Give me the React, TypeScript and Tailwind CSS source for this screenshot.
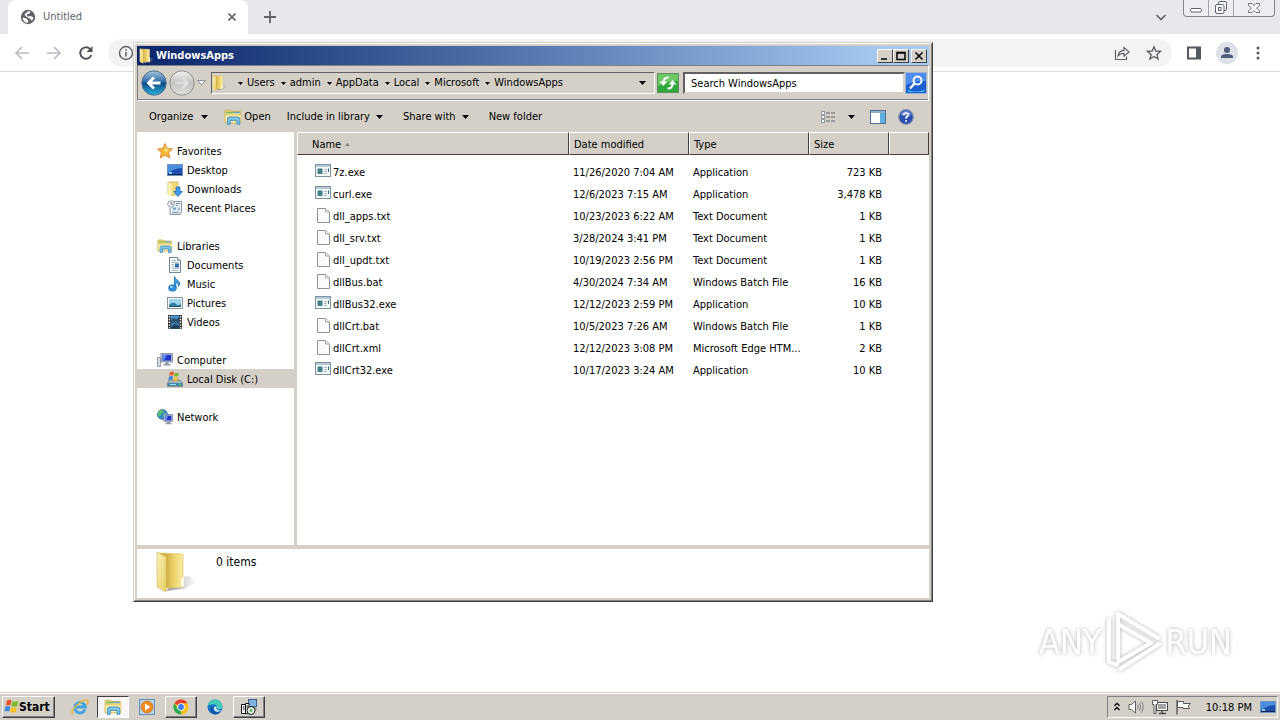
import type { ReactNode } from 'react'

interface FileRow {
  name: string
  date: string
  type: string
  size: string
}

interface NavItem {
  label: string
  icon: ReactNode
  selected?: boolean
}

interface NavGroup extends NavItem {
  items: NavItem[]
}

/* ---------- Explorer icons ---------- */

function FolderIcon({ className = 'h-4 w-4' }: { className?: string }) {
  return (
    <svg className={className} viewBox="0 0 40 42">
      <defs>
        <linearGradient id="folderFront" x1="0" y1="0" x2="1" y2="1">
          <stop offset="0" stopColor="#f9f1bb" />
          <stop offset="1" stopColor="#ead063" />
        </linearGradient>
        <linearGradient id="folderBack" x1="0" y1="0" x2="1" y2="0">
          <stop offset="0.300" stopColor="#d0ae45" />
          <stop offset="0.600" stopColor="#ecd26a" />
          <stop offset="1" stopColor="#f9eda4" />
        </linearGradient>
        <linearGradient id="folderShade" x1="0" y1="0" x2="1" y2="0">
          <stop offset="0" stopColor="#8d8f98" stopOpacity="0.9" />
          <stop offset="1" stopColor="#8d8f98" stopOpacity="0" />
        </linearGradient>
      </defs>
      <path d="M22 26L34 25L40 31L28 38L10 40Z" fill="url(#folderShade)" />
      <path d="M3 2L27 3V36L12 37L3 36Z" fill="url(#folderBack)" stroke="#dcc05c" strokeWidth="0.6" />
      <path d="M1 1L10 6V41L1 36Z" fill="url(#folderFront)" stroke="#d9bd57" strokeWidth="0.6" />
      <path d="M25 28L28 25V35L25 36Z" fill="#fffbe0" />
    </svg>
  )
}

function LibraryIcon({ className = 'h-4 w-4' }: { className?: string }) {
  return (
    <svg className={className} viewBox="0 0 16 16">
      <path d="M1 2H6L7 3H14.500V13H1Z" fill="#f2dc7c" stroke="#d2b04c" strokeWidth="0.8" />
      <path d="M2 4H8L9 3.500" stroke="#69b96c" strokeWidth="1.200" fill="none" />
      <path d="M9 4H14" stroke="#5ba7dc" strokeWidth="1.200" />
      <path d="M1 6H15V13H1Z" fill="#fbeeaa" stroke="#dfc261" strokeWidth="0.6" />
      <path d="M3 14.500V10Q3 8 5 8H12Q14 8 14 10V14.500H11.500V11H5.500V14.500Z" fill="#7cc4e8" stroke="#3e8fc0" strokeWidth="0.8" />
    </svg>
  )
}

function StarIcon() {
  return (
    <svg className="h-4 w-4" viewBox="0 0 16 16">
      <path d="M8 0.600L10.200 5.500L15.500 6L11.600 9.600L12.800 15L8 12.200L3.200 15L4.400 9.600L0.500 6L5.800 5.500Z" fill="#fdb83a" stroke="#d9822b" strokeWidth="0.9" />
      <path d="M8 2.500L9.400 6.300L13 6.700L8 9Z" fill="#ffe48f" />
    </svg>
  )
}

function DesktopIcon() {
  return (
    <svg className="h-4 w-4" viewBox="0 0 16 16">
      <rect x="0.500" y="2.500" width="15" height="11" fill="#1d4fae" stroke="#7193c4" />
      <path d="M1 3H15V6Q8 6 1 11Z" fill="#4a8ee0" />
      <path d="M1 12H15V13H1Z" fill="#12264f" />
      <path d="M2 10H5V12H2Z" fill="#8fc3f0" />
    </svg>
  )
}

function DownloadsIcon() {
  return (
    <svg className="h-4 w-4" viewBox="0 0 16 16">
      <path d="M1 1H11V13L6 14.500L1 13.500Z" fill="#f0d978" stroke="#caa945" strokeWidth="0.7" />
      <path d="M1 1L5 3V15L1 13.500Z" fill="#fbeeaa" />
      <path d="M9 6H13V10.500H15.500L11 15.500L6.500 10.500H9Z" fill="#3d9be9" stroke="#1c66b4" strokeWidth="0.7" />
    </svg>
  )
}

function RecentIcon() {
  return (
    <svg className="h-4 w-4" viewBox="0 0 16 16">
      <path d="M5 1.500H14.500V12L13 14.500H3V8" fill="#e9eef3" stroke="#7d8b99" strokeWidth="0.9" />
      <circle cx="4" cy="4" r="3.300" fill="#f5f8fb" stroke="#8796a5" strokeWidth="0.9" />
      <path d="M4 2V4.200H6" stroke="#556" strokeWidth="0.8" fill="none" />
      <path d="M9 3.500H13M9 5.500H11" stroke="#6d93b8" />
      <rect x="6" y="7.500" width="3" height="2.500" fill="#7fa7c9" />
      <rect x="10.500" y="7.500" width="2.500" height="2.500" fill="#a3b8c9" />
      <path d="M5 12.500H12" stroke="#8da0b0" strokeWidth="1.500" />
    </svg>
  )
}

function DocumentIcon() {
  return (
    <svg className="h-4 w-4" viewBox="0 0 16 16">
      <path d="M2.500 0.500H10.500L13.500 3.500V15.500H2.500Z" fill="#fff" stroke="#6f8395" />
      <path d="M10.500 0.500V3.500H13.500" fill="#d8e2ea" stroke="#6f8395" strokeWidth="0.8" />
      <path d="M4.500 3.500H9M4.500 5.500H11.500M4.500 7.500H7M4.500 9.500H7M4.500 11.500H11.500M4.500 13.500H11.500" stroke="#8ba6be" strokeWidth="0.8" />
      <rect x="8" y="6.500" width="4" height="4" fill="#2f70b0" />
    </svg>
  )
}

function MusicIcon() {
  return (
    <svg className="h-4 w-4" viewBox="0 0 16 16">
      <path d="M7.500 0.500Q8 3 11 4.500Q14 6.500 11.500 10.500Q12 7 8.800 6V12H7.500Z" fill="#4aa9e6" stroke="#1c73b8" strokeWidth="0.9" />
      <ellipse cx="5.500" cy="12" rx="4" ry="3.300" fill="#2f8fdc" stroke="#1b66a9" strokeWidth="0.6" />
      <ellipse cx="4.500" cy="11" rx="1.500" ry="1" fill="#a9dbf7" />
    </svg>
  )
}

function PictureIcon() {
  return (
    <svg className="h-4 w-4" viewBox="0 0 16 16">
      <rect x="0.500" y="2.500" width="15" height="11" fill="#fff" stroke="#8797a6" />
      <rect x="2" y="4" width="12" height="8" fill="#9fd3ee" />
      <path d="M2 10Q6 6 9 9T14 8V12H2Z" fill="#2e7e9c" />
      <path d="M2 11H14V12H2Z" fill="#1f5470" />
    </svg>
  )
}

function VideoIcon() {
  return (
    <svg className="h-4 w-4" viewBox="0 0 16 16">
      <rect x="1" y="1" width="14" height="14" fill="#2f3338" />
      <path d="M4 1.500H12V7.500H4Z" fill="#4b94cf" />
      <path d="M4 8.500H12V14.500H4Z" fill="#3b7db6" />
      <path d="M4 6L7 3.500L9 5.500L12 3V7.500H4Z" fill="#274f73" />
      <path d="M4 13L8 10L12 12V14.500H4Z" fill="#1d3d5c" />
      <path d="M2.500 2V15M13.500 2V15" stroke="#fff" strokeWidth="1.400" strokeDasharray="1.400 1.400" />
    </svg>
  )
}

function ComputerIcon() {
  return (
    <svg className="h-4 w-4" viewBox="0 0 16 16">
      <path d="M0.500 5.500H3.500V14.500H0.500Z" fill="#d5d9de" stroke="#858d97" strokeWidth="0.8" />
      <rect x="4" y="1.500" width="11.500" height="8.500" fill="#c5ccd6" stroke="#7a8594" strokeWidth="0.8" />
      <rect x="5.200" y="2.700" width="9" height="6" fill="#2334c8" />
      <path d="M5.200 2.700H10L7 8.700H5.200Z" fill="#5f86ee" />
      <path d="M8.500 10H11.500V12H13.500V13.500H6.500V12H8.500Z" fill="#8d96a3" />
    </svg>
  )
}

function DiskIcon() {
  return (
    <svg className="h-4 w-4" viewBox="0 0 16 16">
      <path d="M2 9H13L15.500 12V15.500H0.500V12Z" fill="#aab3bb" stroke="#6f7a84" strokeWidth="0.7" />
      <path d="M0.800 12H15.200V15H0.800Z" fill="#3c87a5" />
      <path d="M3 13.500H9" stroke="#9fe0ee" />
      <circle cx="13" cy="13.500" r="0.900" fill="#76e052" />
      <path d="M3 1Q5.500 0 7 1.200L6.300 4.700Q4.500 3.800 2.200 4.700Z" fill="#ee5b2b" />
      <path d="M7.800 1.500Q10 2.600 12 1.500L11.200 5Q9.200 6 7.100 5Z" fill="#77b82a" />
      <path d="M2 5.500Q4.300 4.500 6.100 5.600L5.400 9Q3.500 8 1.300 9Z" fill="#3c87dc" />
      <path d="M6.900 5.900Q9 6.900 11 5.900L10.200 9.300Q8.300 10.300 6.200 9.300Z" fill="#fbc11d" />
    </svg>
  )
}

function NetworkIcon() {
  return (
    <svg className="h-4 w-4" viewBox="0 0 16 16">
      <circle cx="5.500" cy="5.500" r="5" fill="#2f86c8" stroke="#245f8d" strokeWidth="0.6" />
      <path d="M2 2Q5 0 7 2Q6 4 4 4.500Q4 7 2.500 8Q0 5 2 2Z" fill="#5fc26a" />
      <path d="M6 5L9 4L9.500 7L7 9Z" fill="#8ee08f" />
      <rect x="7" y="5.500" width="8.500" height="7" fill="#c9d2dd" stroke="#6c7890" strokeWidth="0.7" />
      <rect x="8.200" y="6.600" width="6.200" height="4.800" fill="#2131cc" />
      <path d="M8.200 6.600H11L9.500 11.400H8.200Z" fill="#6b90f3" />
      <path d="M10 12.500H13V14H14.500V15.200H8.500V14H10Z" fill="#8d96a3" />
    </svg>
  )
}

function ExeIcon() {
  return (
    <svg className="h-4 w-4" viewBox="0 0 16 16">
      <rect x="0.500" y="0.500" width="15" height="12" fill="#f7fafb" stroke="#7e93a2" />
      <path d="M1 1H15V3H1Z" fill="#b6c8d6" />
      <rect x="2.500" y="4.500" width="5" height="5.500" fill="#447f86" />
      <path d="M9 5.500H12M9 7.500H12M9 9.500H12" stroke="#a7bac5" />
      <path d="M13.500 4.500V8" stroke="#3b6a86" />
    </svg>
  )
}

function BlankFileIcon() {
  return (
    <svg className="h-4 w-4" viewBox="0 0 16 16">
      <path d="M2.500 0.500H10.500L14.500 4V14.500H2.500Z" fill="#fbfbfb" stroke="#929292" />
      <path d="M10.500 0.500V4H14.500" fill="#e5e5e5" stroke="#a2a2a2" strokeWidth="0.8" />
    </svg>
  )
}

function DownArrow({ className = '' }: { className?: string }) {
  return (
    <svg className={`shrink-0 ${className}`} width="7" height="4" viewBox="0 0 7 4">
      <path d="M0 0H7L3.500 4Z" fill="#000" />
    </svg>
  )
}

/* ---------- Browser behind the window ---------- */

function Browser() {
  return (
    <header className="border-b border-[#dadce0]">
      <div className="flex h-[34px] items-start bg-[#e6e8ec]">
        <div className="ml-2 flex h-[34px] w-60 items-center rounded-t-lg bg-white px-3 text-[#5f6368]">
          <svg className="h-4 w-4" viewBox="0 0 16 16">
            <circle cx="8" cy="8" r="7.200" fill="#5f6368" />
            <path d="M2.500 8.500L6.500 9.500L8.500 12L7.500 14Q3.500 13.500 2.500 8.500Z" fill="#fff" />
            <path d="M8 2.200H10.500L9.500 4.500L6.500 5.500L7.500 7.500L10.500 7L13.500 8.500L12 12L10.500 10L6 7.500L4.500 5.500Z" fill="#fff" />
          </svg>
          <span className="ml-[7px] flex-1">Untitled</span>
          <button type="button" aria-label="Close tab">
            <svg className="h-2 w-2" viewBox="0 0 8 8">
              <path d="M0.500 0.500L7.500 7.500M7.500 0.500L0.500 7.500" stroke="#5f6368" strokeWidth="1.600" />
            </svg>
          </button>
        </div>
        <button type="button" aria-label="New tab" className="ml-4 flex h-[34px] items-center">
          <svg className="h-3 w-3" viewBox="0 0 12 12">
            <path d="M6 0V12M0 6H12" stroke="#5f6368" strokeWidth="1.800" />
          </svg>
        </button>
        <button type="button" aria-label="Search tabs" className="mr-4 ml-auto flex h-[34px] items-center">
          <svg className="h-3 w-3" viewBox="0 0 12 12">
            <path d="M1.500 4L6 8.500L10.500 4" stroke="#5f6368" strokeWidth="1.700" fill="none" />
          </svg>
        </button>
        <div className="mr-[5px] flex h-[17px] rounded-b border border-t-0 border-[#80858c] bg-[#eceef1]">
          <button type="button" aria-label="Minimize" className="flex w-[25px] items-center justify-center border-r border-[#a3a7ad]">
            <svg className="h-4 w-4" viewBox="0 0 16 16">
              <rect x="2.500" y="8.500" width="11" height="3.500" rx="1.500" fill="#fff" stroke="#5c6370" />
            </svg>
          </button>
          <button type="button" aria-label="Restore" className="flex w-[25px] items-center justify-center border-r border-[#a3a7ad]">
            <svg className="h-4 w-4" viewBox="0 0 16 16">
              <rect x="5.500" y="1.500" width="8" height="9" rx="1.500" fill="#fff" stroke="#5c6370" />
              <rect x="2.500" y="4.500" width="8.500" height="9" rx="1.500" fill="#fff" stroke="#5c6370" />
              <rect x="5.500" y="7.500" width="2.500" height="3" fill="#fff" stroke="#5c6370" />
            </svg>
          </button>
          <button type="button" aria-label="Close" className="flex w-10 items-center justify-center">
            <svg className="h-4 w-4" viewBox="0 0 16 16">
              <path d="M2.500 3.500H6L8 5.500L10 3.500H13.500V5.500L10.500 8L13.500 11V12.500H10L8 10.500L6 12.500H2.500V11L5.500 8L2.500 5.500Z" fill="#fff" stroke="#5c6370" strokeWidth="0.9" />
            </svg>
          </button>
        </div>
      </div>

      <div className="flex h-[37px] items-center px-3.5">
        <button type="button" aria-label="Back">
          <svg className="h-4 w-4" viewBox="0 0 16 16">
            <path d="M15 8H2M8 2L2 8L8 14" stroke="#b9bcc0" strokeWidth="1.700" fill="none" />
          </svg>
        </button>
        <button type="button" aria-label="Forward" className="ml-4">
          <svg className="h-4 w-4" viewBox="0 0 16 16">
            <path d="M1 8H14M8 2L14 8L8 14" stroke="#b9bcc0" strokeWidth="1.700" fill="none" />
          </svg>
        </button>
        <button type="button" aria-label="Reload" className="ml-4">
          <svg className="h-4 w-4" viewBox="0 0 16 16">
            <path d="M13.300 10A5.700 5.700 0 1 1 12 4" stroke="#4d5156" strokeWidth="1.900" fill="none" />
            <path d="M14.500 1V7H8.500Z" fill="#4d5156" />
          </svg>
        </button>
        <div className="ml-3.5 flex h-7 flex-1 items-center rounded-full bg-[#f1f3f4] px-2.5">
          <svg className="h-4 w-4" viewBox="0 0 16 16">
            <circle cx="8" cy="8" r="6.500" fill="none" stroke="#5f6368" strokeWidth="1.400" />
            <path d="M8 7V11.500M8 4.300V5.800" stroke="#5f6368" strokeWidth="1.600" />
          </svg>
          <input aria-label="Address" className="min-w-0 flex-1 bg-transparent outline-none" />
          <button type="button" aria-label="Share">
            <svg className="h-4 w-4" viewBox="0 0 16 16">
              <path d="M1.500 5V14.500H12.500V11.500" stroke="#5f6368" strokeWidth="1.200" fill="none" />
              <path d="M4 11Q4.500 5.500 10 5.300V2.500L15 7L10 11.200V8.300Q6 8.200 4 11Z" stroke="#5f6368" strokeWidth="1.200" fill="none" />
            </svg>
          </button>
          <button type="button" aria-label="Bookmark" className="ml-4">
            <svg className="h-4 w-4" viewBox="0 0 16 16">
              <path d="M8 1.800L9.800 6L14.500 6.400L10.900 9.400L12 14L8 11.500L4 14L5.100 9.400L1.500 6.400L6.200 6Z" fill="none" stroke="#5f6368" strokeWidth="1.400" />
            </svg>
          </button>
        </div>
        <button type="button" aria-label="Side panel" className="ml-3.5">
          <svg className="h-4 w-4" viewBox="0 0 16 16">
            <path d="M1 1.500H15V14.500H1ZM3 3.500V12.500H10V3.500Z" fill="#55585e" fillRule="evenodd" />
          </svg>
        </button>
        <button type="button" aria-label="Profile" className="ml-3.5 rounded-full bg-[#dde1e8]">
          <svg className="h-[22px] w-[22px]" viewBox="0 0 22 22">
            <circle cx="11" cy="8" r="3" fill="#4f5b78" />
            <path d="M5 16V14.500Q5 12 11 12T17 14.500V16Z" fill="#4f5b78" />
          </svg>
        </button>
        <button type="button" aria-label="Menu" className="ml-3">
          <svg className="h-4 w-4" viewBox="0 0 16 16" fill="#55585e">
            <circle cx="8" cy="3" r="1.500" />
            <circle cx="8" cy="8" r="1.500" />
            <circle cx="8" cy="13" r="1.500" />
          </svg>
        </button>
      </div>
    </header>
  )
}

/* ---------- Explorer window ---------- */

const crumbs = ['Users', 'admin', 'AppData', 'Local', 'Microsoft', 'WindowsApps']

const navGroups: NavGroup[] = [
  {
    label: 'Favorites',
    icon: <StarIcon />,
    items: [
      { label: 'Desktop', icon: <DesktopIcon /> },
      { label: 'Downloads', icon: <DownloadsIcon /> },
      { label: 'Recent Places', icon: <RecentIcon /> },
    ],
  },
  {
    label: 'Libraries',
    icon: <LibraryIcon />,
    items: [
      { label: 'Documents', icon: <DocumentIcon /> },
      { label: 'Music', icon: <MusicIcon /> },
      { label: 'Pictures', icon: <PictureIcon /> },
      { label: 'Videos', icon: <VideoIcon /> },
    ],
  },
  {
    label: 'Computer',
    icon: <ComputerIcon />,
    items: [{ label: 'Local Disk (C:)', icon: <DiskIcon />, selected: true }],
  },
  { label: 'Network', icon: <NetworkIcon />, items: [] },
]

const files: FileRow[] = [
  { name: '7z.exe', date: '11/26/2020 7:04 AM', type: 'Application', size: '723 KB' },
  { name: 'curl.exe', date: '12/6/2023 7:15 AM', type: 'Application', size: '3,478 KB' },
  { name: 'dll_apps.txt', date: '10/23/2023 6:22 AM', type: 'Text Document', size: '1 KB' },
  { name: 'dll_srv.txt', date: '3/28/2024 3:41 PM', type: 'Text Document', size: '1 KB' },
  { name: 'dll_updt.txt', date: '10/19/2023 2:56 PM', type: 'Text Document', size: '1 KB' },
  { name: 'dllBus.bat', date: '4/30/2024 7:34 AM', type: 'Windows Batch File', size: '16 KB' },
  { name: 'dllBus32.exe', date: '12/12/2023 2:59 PM', type: 'Application', size: '10 KB' },
  { name: 'dllCrt.bat', date: '10/5/2023 7:26 AM', type: 'Windows Batch File', size: '1 KB' },
  { name: 'dllCrt.xml', date: '12/12/2023 3:08 PM', type: 'Microsoft Edge HTM...', size: '2 KB' },
  { name: 'dllCrt32.exe', date: '10/17/2023 3:24 AM', type: 'Application', size: '10 KB' },
]

function CaptionButton({ label, path, className = '' }: { label: string; path: string; className?: string }) {
  return (
    <button
      type="button"
      aria-label={label}
      className={`flex h-3.5 w-4 items-center justify-center border border-t-white border-r-[#404040] border-b-[#404040] border-l-white bg-[#d4d0c8] ${className}`}
    >
      <svg width="10" height="10" viewBox="0 0 10 10">
        <path d={path} stroke="#000" strokeWidth="1.500" fill="none" />
      </svg>
    </button>
  )
}

function TitleBar() {
  return (
    <div className="flex h-[19px] items-center bg-linear-to-r from-[#0a246a] to-[#a6caf0] to-95% px-0.5">
      <FolderIcon />
      <span className="ml-px flex-1 font-bold text-white">WindowsApps</span>
      <CaptionButton label="Minimize" path="M1 8H7" />
      <CaptionButton label="Maximize" path="M1 1.500H9V8.500H1ZM1 2H9" />
      <CaptionButton label="Close" path="M1.500 1.500L8.500 8.500M8.500 1.500L1.500 8.500" className="ml-0.5" />
    </div>
  )
}

function AddressBar() {
  return (
    <div className="flex h-9 items-center border border-t-[#808080] border-r-white border-b-white border-l-[#808080] pr-px pl-[3px] shadow-[inset_0_-1px_0_#808080]">
      <button type="button" aria-label="Back">
        <svg className="h-[26px] w-[26px]" viewBox="0 0 26 26">
          <defs>
            <linearGradient id="backBlue" x1="0" y1="0" x2="0" y2="1">
              <stop offset="0" stopColor="#a9c6e0" />
              <stop offset="0.450" stopColor="#2f6ea8" />
              <stop offset="0.500" stopColor="#0b4a86" />
              <stop offset="1" stopColor="#2cb4dd" />
            </linearGradient>
          </defs>
          <circle cx="13" cy="13" r="12.200" fill="url(#backBlue)" stroke="#4f6b86" />
          <path d="M19.500 13H8M13 7.500L7.500 13L13 18.500" fill="none" stroke="#fff" strokeWidth="2.800" />
        </svg>
      </button>
      <button type="button" aria-label="Forward" className="ml-0.5">
        <svg className="h-[26px] w-[26px]" viewBox="0 0 26 26">
          <defs>
            <linearGradient id="forwardGrey" x1="0" y1="0" x2="0" y2="1">
              <stop offset="0" stopColor="#f2f1ef" />
              <stop offset="0.500" stopColor="#c4c2bf" />
              <stop offset="1" stopColor="#e4e2df" />
            </linearGradient>
          </defs>
          <circle cx="13" cy="13" r="12.200" fill="url(#forwardGrey)" stroke="#8f8e8c" />
          <path d="M6.500 13H18M13 7.500L18.500 13L13 18.500" fill="none" stroke="#e0dfdd" strokeWidth="2.500" />
        </svg>
      </button>
      <button type="button" aria-label="Recent pages" className="ml-0.5">
        <svg width="9" height="6" viewBox="0 0 9 6">
          <path d="M0.500 0.500H8.500L4.500 5Z" fill="#f4f4f4" stroke="#77797c" strokeWidth="0.800" />
        </svg>
      </button>
      <div className="ml-[5px] flex h-[22px] min-w-0 flex-1 items-center border border-t-[#606060] border-r-white border-b-white border-l-[#606060] pr-2">
        <FolderIcon />
        <nav aria-label="Path" className="ml-1 flex flex-1 items-center">
          {crumbs.map((crumb) => (
            <span key={crumb} className="flex items-center gap-1 pl-1.5">
              <svg width="5" height="3" viewBox="0 0 5 3">
                <path d="M0 0H5L2.500 3Z" fill="#000" />
              </svg>
              <button type="button">{crumb}</button>
            </span>
          ))}
        </nav>
        <button type="button" aria-label="Previous locations">
          <DownArrow />
        </button>
      </div>
      <button type="button" aria-label="Refresh" className="ml-0.5">
        <svg className="h-5 w-[22px]" viewBox="0 0 22 20">
          <rect x="0.500" y="0.500" width="21" height="19" fill="#2fa83a" stroke="#5f8f62" />
          <path d="M1 1H21V8Q11 8 1 13Z" fill="#6cc765" />
          <path d="M11.500 4.500Q6.500 4.500 6.500 9" fill="none" stroke="#fff" strokeWidth="2" />
          <path d="M2.500 8.500H10.500L6.500 13Z" fill="#fff" />
          <path d="M10.500 15.500Q15.500 15.500 15.500 11" fill="none" stroke="#fff" strokeWidth="2" />
          <path d="M11.500 11.500H19.500L15.500 7Z" fill="#fff" />
        </svg>
      </button>
      <input
        type="text"
        aria-label="Search"
        placeholder="Search WindowsApps"
        className="ml-1 h-[22px] w-[222px] border-2 border-t-[#606060] border-r-[#d4d0c8] border-b-[#d4d0c8] border-l-[#606060] bg-white pl-1.5 outline-none placeholder:text-black"
      />
      <button type="button" aria-label="Start search">
        <svg className="h-[22px] w-[22px]" viewBox="0 0 22 22">
          <rect x="0.500" y="0.500" width="21" height="21" fill="#1d5fcf" stroke="#9fb4d0" />
          <path d="M1 1H21V9Q10 9 1 13Z" fill="#4f8cf0" />
          <path d="M3 18Q11 21 19 18V20H3Z" fill="#39c5f2" />
          <circle cx="12.500" cy="8.500" r="4" fill="none" stroke="#fff" strokeWidth="2" />
          <path d="M9.500 11.500L5 16.500" stroke="#fff" strokeWidth="2.500" />
        </svg>
      </button>
    </div>
  )
}

function Toolbar() {
  return (
    <div className="flex h-[31px] items-center pr-[15px] pl-3">
      <button type="button" className="flex items-center">
        Organize
        <DownArrow className="ml-2" />
      </button>
      <button type="button" className="ml-4 flex items-center">
        <LibraryIcon className="mr-0.5 h-[18px] w-[18px]" />
        Open
      </button>
      <button type="button" className="ml-4 flex items-center">
        Include in library
        <DownArrow className="ml-1.5" />
      </button>
      <button type="button" className="ml-5 flex items-center">
        Share with
        <DownArrow className="ml-1.5" />
      </button>
      <button type="button" className="ml-5">New folder</button>
      <button type="button" aria-label="Change view" className="ml-auto flex items-center">
        <svg className="h-4 w-4" viewBox="0 0 16 16">
          <path d="M1.500 2.500H4.500V5.500H1.500ZM1.500 6.500H4.500V9.500H1.500ZM1.500 10.500H4.500V13.500H1.500Z" fill="#fff" stroke="#77808a" strokeWidth="0.800" />
          <path d="M6 4H15M6 8H15M6 12H15" stroke="#5b6570" strokeDasharray="4 1" />
        </svg>
        <DownArrow className="ml-3" />
      </button>
      <button type="button" aria-label="Preview pane" className="ml-[15px]">
        <svg className="h-4 w-4" viewBox="0 0 16 16">
          <rect x="0.500" y="1.500" width="15" height="13" fill="#fff" stroke="#4d6f91" />
          <path d="M1 2H15V4H1Z" fill="#8fb1cf" />
          <rect x="10" y="4" width="5" height="10" fill="#5db0de" />
        </svg>
      </button>
      <button type="button" aria-label="Help" className="ml-3">
        <svg className="h-4 w-4" viewBox="0 0 16 16">
          <circle cx="8" cy="8" r="7.300" fill="#2b4fb0" stroke="#8290ac" strokeWidth="1.200" />
          <path d="M2.500 6Q4 2 8 2T13.500 6Q8 8 2.500 6Z" fill="#6c8ddb" />
          <path d="M5.600 6Q5.800 4 8 4T10.400 6Q10.400 7.300 8.100 8.200V9.700" stroke="#fff" strokeWidth="1.600" fill="none" />
          <circle cx="8.100" cy="11.900" r="1" fill="#fff" />
        </svg>
      </button>
    </div>
  )
}

function Sidebar() {
  return (
    <aside className="flex w-[160px] shrink-0 flex-col gap-[19px] border-r-3 border-[#d4d0c8] bg-white py-[9px]">
      {navGroups.map((group) => (
        <div key={group.label}>
          <button type="button" className="flex h-[19px] w-full items-center gap-1 pl-5">
            {group.icon}
            <span className="pt-0.5">{group.label}</span>
          </button>
          {group.items.map((item) => (
            <button
              type="button"
              key={item.label}
              className={`flex h-[19px] w-full items-center gap-1 pl-[30px] ${item.selected ? 'bg-[#d4d0c8]' : ''}`}
            >
              {item.icon}
              <span className="pt-0.5">{item.label}</span>
            </button>
          ))}
        </div>
      ))}
    </aside>
  )
}

function FileList() {
  const head = 'h-[23px] border border-t-white border-r-[#404040] border-b-[#404040] border-l-white bg-[#d4d0c8] pt-0.5 pl-1 text-left font-normal'

  return (
    <main className="min-w-0 flex-1 bg-white">
      <table className="w-full table-fixed border-separate border-spacing-0">
        <colgroup>
          <col className="w-[272px]" />
          <col className="w-[120px]" />
          <col className="w-[120px]" />
          <col className="w-[80px]" />
          <col />
        </colgroup>
        <thead>
          <tr>
            <th className={head}>
              <span className="flex items-center pl-2.5">
                Name
                <svg className="ml-1" width="5" height="3" viewBox="0 0 5 3">
                  <path d="M2.500 0L5 3H0Z" fill="#808080" />
                </svg>
              </span>
            </th>
            <th className={head}>Date modified</th>
            <th className={head}>Type</th>
            <th className={head}>Size</th>
            <th className={head} aria-label="Empty" />
          </tr>
        </thead>
        <tbody className="before:block before:h-1.5">
          {files.map((file) => (
            <tr key={file.name} className="h-[22px] whitespace-nowrap">
              <td className="pl-[18px]">
                <span className="flex items-center gap-0.5">
                  {file.name.endsWith('.exe') ? <ExeIcon /> : <BlankFileIcon />}
                  <span className="pt-0.5">{file.name}</span>
                </span>
              </td>
              <td className="pt-0.5 pl-1">{file.date}</td>
              <td className="pt-0.5 pl-1">{file.type}</td>
              <td className="pt-0.5 pr-[7px] text-right">{file.size}</td>
              <td />
            </tr>
          ))}
        </tbody>
      </table>
    </main>
  )
}

function ExplorerWindow() {
  return (
    <section
      aria-label="WindowsApps"
      className="absolute top-[42px] left-[133px] w-[800px] border border-t-[#d4d0c8] border-r-[#404040] border-b-[#404040] border-l-[#d4d0c8]"
    >
      <div className="border border-t-white border-r-[#808080] border-b-[#808080] border-l-white bg-[#d4d0c8] p-0.5">
        <TitleBar />
        <AddressBar />
        <Toolbar />
        <div className="flex min-h-[413px]">
          <Sidebar />
          <FileList />
        </div>
        <div className="mt-1 flex h-[49px] items-start bg-white pt-0.5 pl-[19px]">
          <FolderIcon className="h-[42px] w-10" />
          <span className="ml-5 pt-[3px] text-xs">0 items</span>
        </div>
      </div>
    </section>
  )
}

/* ---------- Watermark ---------- */

function Watermark() {
  return (
    <div className="absolute right-12 bottom-[46px] flex items-center gap-1 text-[34px] leading-none text-white drop-shadow-[0_0_2px_#b4b4b4]">
      <span>ANY</span>
      <svg className="h-16 w-14" viewBox="0 0 56 64" fill="none" stroke="#fff" strokeWidth="4" strokeLinejoin="round" strokeLinecap="round">
        <path d="M13 48V4L53 28" />
        <path d="M4 10V52L12 55" />
        <path d="M13 14L46 33L13 52" />
        <path d="M54 34L15 59" />
      </svg>
      <span>RUN</span>
    </div>
  )
}

/* ---------- Taskbar ---------- */

function TaskButton({ label, active = false, children }: { label: string; active?: boolean; children: ReactNode }) {
  return (
    <button
      type="button"
      aria-label={label}
      className={`flex h-[22px] w-8 items-center justify-center border ${
        active
          ? 'border-t-[#404040] border-r-white border-b-white border-l-[#404040] bg-[#f7f6f4]'
          : 'border-t-white border-r-[#404040] border-b-[#404040] border-l-white shadow-[inset_-1px_-1px_0_#808080]'
      }`}
    >
      {children}
    </button>
  )
}

function Taskbar() {
  return (
    <footer className="mt-auto flex h-7 items-center border-t border-[#d4d0c8] bg-[#d4d0c8] px-0.5 shadow-[inset_0_1px_0_#fff]">
      <button
        type="button"
        className="flex h-[22px] items-center border border-t-white border-r-[#404040] border-b-[#404040] border-l-white pr-1 pl-px text-xs font-bold shadow-[inset_-1px_-1px_0_#808080]"
      >
        <svg className="h-[15px] w-[15px]" viewBox="0 0 15 15">
          <path d="M3 1.500Q5.500 0 7.500 1.500L6.500 6.500Q4.500 5.300 1.800 6.500Z" fill="#ee5426" />
          <path d="M8.500 2Q11 3.500 14.500 2L13.300 7Q10.500 8.500 7.500 7Z" fill="#7cbb2c" />
          <path d="M1.500 7.500Q4.500 6.300 6.300 7.500L5.300 12.500Q3 11.300 0.300 12.500Z" fill="#3f8ae0" />
          <path d="M7.200 8Q10 9.500 13 8L11.900 13Q9 14.500 6.100 13Z" fill="#fcc21b" />
        </svg>
        Start
      </button>
      <div className="ml-4 flex items-center gap-2">
        <button type="button" aria-label="Internet Explorer">
          <svg className="h-[18px] w-[18px]" viewBox="0 0 18 18" fill="none">
            <path d="M14 11.500A5.300 5.300 0 1 1 14.300 9H5" stroke="#3da5e6" strokeWidth="2.800" />
            <path d="M2 16Q-1 14 5 8T16.500 2Q18 3.500 15.500 7" stroke="#e8b53a" strokeWidth="1.400" />
          </svg>
        </button>
        <TaskButton label="Windows Explorer" active>
          <LibraryIcon className="h-[18px] w-[18px]" />
        </TaskButton>
        <button type="button" aria-label="Media Player" className="mx-0.5">
          <svg className="h-4 w-4" viewBox="0 0 16 16">
            <rect x="0.500" y="0.500" width="15" height="15" fill="#b7d5ef" stroke="#5f8fb8" />
            <circle cx="8" cy="8" r="6" fill="#f58a1f" stroke="#d66c0e" strokeWidth="0.700" />
            <path d="M6 4.500L11.500 8L6 11.500Z" fill="#fff" />
          </svg>
        </button>
        <TaskButton label="Chrome">
          <svg className="h-4 w-4" viewBox="0 0 16 16">
            <circle cx="8" cy="8" r="7.500" fill="#fbc116" />
            <path d="M8 8L1.500 4.250A7.500 7.500 0 0 1 14.500 4.250H8Z" fill="#e33b2e" />
            <path d="M1.500 4.250L5.500 11L8 8L8 15.500A7.500 7.500 0 0 1 1.500 4.250Z" fill="#2da94f" />
            <circle cx="8" cy="8" r="3.800" fill="#fff" />
            <circle cx="8" cy="8" r="2.900" fill="#3b7ded" />
          </svg>
        </TaskButton>
        <button type="button" aria-label="Edge" className="mx-0.5">
          <svg className="h-4 w-4" viewBox="0 0 16 16">
            <circle cx="8" cy="8" r="7.500" fill="#1673c4" />
            <path d="M0.600 7A7.500 7.500 0 0 1 15.500 7.500Q15.300 10.500 11.500 10.500Q9.500 10.400 10 9Q10.500 6 7 5.200Q3 4.800 0.600 7Z" fill="#43c9b8" />
            <path d="M6 7.500Q4.500 12.500 9.500 13.500Q12 13.800 14 12Q11.500 15.500 8 15.500Q3.500 14 3.600 10Q4 8 6 7.500Z" fill="#134f9d" />
            <path d="M7 8.500Q6.500 12 10 12.700Q13 13 14.600 11.300Q12 11.800 10 10.700Q8.500 9 10 8Q8 7 7 8.500Z" fill="#d4ecf4" />
          </svg>
        </button>
        <TaskButton label="Setup">
          <svg className="h-[18px] w-[18px]" viewBox="0 0 18 18">
            <rect x="8.500" y="1.500" width="8" height="7" fill="#7eb4e2" stroke="#3b5f86" />
            <path d="M9 10H16V12H9Z" fill="#d5dae0" stroke="#5d6670" strokeWidth="0.700" />
            <path d="M1.500 6.500H5.500V15.500H1.500ZM5.500 5.500H9V15.500H5.500Z" fill="#f5f5f5" stroke="#111" />
            <path d="M3 9H4.500M3 11H4.500M6.500 8H8M6.500 10H8" stroke="#111" />
            <circle cx="11" cy="12.500" r="4" fill="#dff0dc" stroke="#222" />
            <circle cx="11" cy="12.500" r="1.300" fill="#4da34f" />
          </svg>
        </TaskButton>
      </div>

      {/* Notification area */}
      <div className="ml-auto flex h-[22px] items-center border border-t-[#808080] border-r-white border-b-white border-l-[#808080] pr-px pl-1.5">
        <button type="button" aria-label="Show hidden icons">
          <svg width="6" height="9" viewBox="0 0 6 9">
            <path d="M0.500 3.800L3 1.300L5.500 3.800M0.500 8L3 5.500L5.500 8" stroke="#000" strokeWidth="1.300" fill="none" />
          </svg>
        </button>
        <svg className="ml-2 h-4 w-4" viewBox="0 0 16 16">
          <path d="M1 5.500H3.500L7.500 2V14L3.500 10.500H1Z" fill="#fff" stroke="#5f5f5f" />
          <path d="M9.500 5.500Q11 8 9.500 10.500M11.500 4Q14 8 11.500 12M13.500 2.500Q17 8 13.500 13.500" stroke="#777" strokeWidth="0.900" fill="none" />
        </svg>
        <svg className="ml-2 h-4 w-4" viewBox="0 0 16 16">
          <rect x="4.500" y="3.500" width="11" height="8" fill="#a4a4a4" stroke="#4a4a4a" />
          <path d="M5.500 4.500H14.500V10.500H5.500Z" fill="none" stroke="#fff" />
          <path d="M7 14.500H14M10 12V14" stroke="#4a4a4a" strokeWidth="1.500" />
          <path d="M0.500 1.500H5.500V5.500H4V14.500H2V5.500H0.500Z" fill="#fff" stroke="#4a4a4a" strokeWidth="0.900" />
        </svg>
        <svg className="ml-2 h-4 w-4" viewBox="0 0 16 16">
          <path d="M1 1V15.500" stroke="#5a5a5a" strokeWidth="1.400" />
          <path d="M1.500 2.500H7.500V4.500H14.500L12 7L13.500 9.500H7V8.500H1.500Z" fill="#fff" stroke="#5a5a5a" />
        </svg>
        <time className="ml-3.5 pt-0.5">10:18 PM</time>
        <button type="button" aria-label="Show desktop" className="ml-2">
          <DesktopIcon />
        </button>
      </div>
    </footer>
  )
}

export default function App() {
  return (
    <div className="relative flex min-h-screen flex-col overflow-hidden bg-white font-['DejaVu_Sans_Condensed','Noto_Sans',sans-serif] text-[11px] leading-4 text-black">
      <Browser />
      <ExplorerWindow />
      <Watermark />
      <Taskbar />
    </div>
  )
}
